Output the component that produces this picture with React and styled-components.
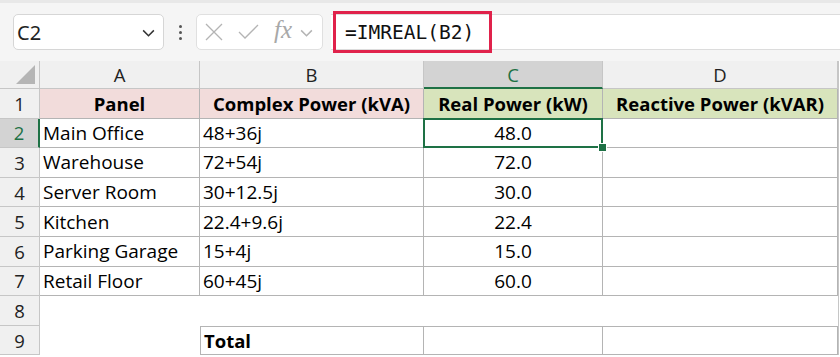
import React from 'react'
import styled, { createGlobalStyle } from 'styled-components'

const GlobalStyle = createGlobalStyle`
  body {
    margin: 0;
    background: #ffffff;
    font-family: "Open Sans", "Noto Sans", sans-serif;
  }
`

const GREEN = '#1e7145'
const GRID = '#c6c6c6'
const LINE = '#b4b4b4'

const Page = styled.div`
  width: 840px;
  height: 357px;
  overflow: hidden;
  background: #ffffff;
`

const Toolbar = styled.div`
  height: 61px;
  box-sizing: border-box;
  display: flex;
  align-items: center;
  padding: 0 0 0 13px;
  background: #f5f5f5;
  border-top: 3px solid #e8e8e8;
`

const NameBox = styled.div`
  width: 151px;
  height: 36px;
  box-sizing: border-box;
  display: flex;
  align-items: center;
  justify-content: space-between;
  padding: 0 7px 0 3px;
  background: #fff;
  border: 1px solid #d6d6d6;
  border-radius: 5px;
  font-family: "Noto Sans", sans-serif;
  font-size: 20px;
  color: #222;
`

const Dots = styled.div`
  width: 32px;
  display: flex;
  flex-direction: column;
  align-items: center;
  gap: 3px;
  span {
    width: 3px;
    height: 3px;
    border-radius: 50%;
    background: #555;
  }
`

const FuncBox = styled.div`
  width: 127px;
  height: 36px;
  box-sizing: border-box;
  display: flex;
  align-items: center;
  gap: 15px;
  padding: 0 4px 0 8px;
  background: #fff;
  border: 1px solid #e0e0e0;
  border-radius: 5px;
  color: #b4b4b4;
`

const Fx = styled.span`
  font-family: "Liberation Serif", serif;
  font-style: italic;
  font-size: 25px;
  color: #a8a8a8;
  margin: -4px -8px 0 0;
`

const FormulaBar = styled.div`
  flex: 1;
  height: 36px;
  margin-left: 8px;
  box-sizing: border-box;
  display: flex;
  align-items: center;
  background: #fff;
  border-top: 1px solid #dcdcdc;
  border-bottom: 1px solid #dcdcdc;
`

const Highlight = styled.div`
  height: 42px;
  width: 159px;
  box-sizing: border-box;
  margin-left: 2px;
  display: flex;
  align-items: center;
  padding-left: 9px;
  border: 3px solid #e0224b;
  font-family: "DejaVu Sans Mono", "Liberation Mono", monospace;
  font-size: 19.5px;
  color: #111;
`

const Sheet = styled.div`
  display: grid;
  grid-template-columns: 40px 160px 224px 179px 235px 2px;
  grid-template-rows: 28px repeat(9, 29.6px);
  font-family: "Open Sans", "Noto Sans", sans-serif;
`

const Corner = styled.div`
  position: relative;
  background: #f0f0f0;
  border-right: 1px solid ${GRID};
  border-bottom: 1px solid ${GRID};
  &::after {
    content: '';
    position: absolute;
    right: 4px;
    bottom: 4px;
    width: 0;
    height: 0;
    border-left: 19px solid transparent;
    border-bottom: 19px solid #b5b5b5;
  }
`

const ColHead = styled.div`
  box-sizing: border-box;
  display: flex;
  align-items: center;
  justify-content: center;
  background: ${p => (p.$active ? '#d3d3d3' : '#f0f0f0')};
  color: ${p => (p.$active ? GREEN : '#222')};
  border-right: 1px solid ${GRID};
  border-bottom: ${p => (p.$active ? `2px solid ${GREEN}` : `1px solid ${GRID}`)};
  font-size: 18.5px;
`

const RowHead = styled.div`
  box-sizing: border-box;
  display: flex;
  align-items: center;
  justify-content: center;
  background: ${p => (p.$active ? '#d3d3d3' : '#f0f0f0')};
  color: ${p => (p.$active ? GREEN : '#222')};
  border-right: ${p => (p.$active ? `2px solid ${GREEN}` : `1px solid ${GRID}`)};
  border-bottom: 1px solid ${GRID};
  font-size: 18.5px;
`

const Cell = styled.div`
  position: relative;
  z-index: ${p => (p.$selected ? 2 : 'auto')};
  box-sizing: border-box;
  display: flex;
  align-items: center;
  justify-content: ${p => (p.$align === 'center' ? 'center' : 'flex-start')};
  padding: 0 3px;
  white-space: nowrap;
  font-size: ${p => (p.$bold ? '18.5px' : '19px')};
  font-weight: ${p => (p.$bold ? 700 : 400)};
  color: #000;
  background: ${p => p.$fill || '#fff'};
  border-right: ${p => (p.$plain ? 'none' : `1px solid ${LINE}`)};
  border-bottom: ${p => (p.$plain ? 'none' : `1px solid ${LINE}`)};
  border-top: ${p => (p.$boxed ? `1px solid ${LINE}` : 'none')};
  border-left: ${p => (p.$boxedLeft ? `1px solid ${LINE}` : 'none')};
`

const Selection = styled.div`
  position: absolute;
  inset: -1px -1px -1px -1px;
  border: 2px solid ${GREEN};
  pointer-events: none;
`

const FillHandle = styled.div`
  position: absolute;
  right: -5px;
  bottom: -5px;
  width: 7px;
  height: 7px;
  background: ${GREEN};
  border: 1px solid #fff;
`

const Edge = styled.div`
  background: #fff;
  border-left: 1px solid ${GRID};
`

const Chevron = ({ color = '#333' }) => (
  <svg width="15" height="15" viewBox="0 0 14 14" fill="none" stroke={color} strokeWidth="1.4">
    <path d="M2 5l5 5 5-5" />
  </svg>
)

const PINK = '#f2dcdb'
const LIME = '#d8e4bc'

const rows = [
  ['Main Office', '48+36j', '48.0'],
  ['Warehouse', '72+54j', '72.0'],
  ['Server Room', '30+12.5j', '30.0'],
  ['Kitchen', '22.4+9.6j', '22.4'],
  ['Parking Garage', '15+4j', '15.0'],
  ['Retail Floor', '60+45j', '60.0'],
]

export default function App() {
  return (
    <Page>
      <GlobalStyle />
      <Toolbar>
        <NameBox>
          <span>C2</span>
          <Chevron />
        </NameBox>
        <Dots>
          <span />
          <span />
          <span />
        </Dots>
        <FuncBox>
          <svg width="18" height="18" viewBox="0 0 18 18" stroke="#b4b4b4" strokeWidth="1.3">
            <path d="M1 1l16 16M17 1L1 17" />
          </svg>
          <svg width="21" height="16" viewBox="0 0 21 16" fill="none" stroke="#b4b4b4" strokeWidth="1.3">
            <path d="M1 8l6 6L20 1" />
          </svg>
          <Fx>fx</Fx>
          <Chevron color="#b4b4b4" />
        </FuncBox>
        <FormulaBar>
          <Highlight>=IMREAL(B2)</Highlight>
        </FormulaBar>
      </Toolbar>
      <Sheet>
        <Corner />
        <ColHead>A</ColHead>
        <ColHead>B</ColHead>
        <ColHead $active>C</ColHead>
        <ColHead>D</ColHead>
        <Edge />

        <RowHead>1</RowHead>
        <Cell $fill={PINK} $align="center" $bold>Panel</Cell>
        <Cell $fill={PINK} $align="center" $bold>Complex Power (kVA)</Cell>
        <Cell $fill={LIME} $align="center" $bold>Real Power (kW)</Cell>
        <Cell $fill={LIME} $align="center" $bold>Reactive Power (kVAR)</Cell>
        <Edge />

        {rows.map((r, i) => (
          <React.Fragment key={r[0]}>
            <RowHead $active={i === 0}>{i + 2}</RowHead>
            <Cell>{r[0]}</Cell>
            <Cell>{r[1]}</Cell>
            <Cell $align="center" $selected={i === 0}>
              {r[2]}
              {i === 0 && <Selection />}
              {i === 0 && <FillHandle />}
            </Cell>
            <Cell />
            <Edge />
          </React.Fragment>
        ))}

        <RowHead>8</RowHead>
        <Cell $plain />
        <Cell $plain />
        <Cell $plain />
        <Cell $plain />
        <Edge />

        <RowHead>9</RowHead>
        <Cell $plain />
        <Cell $bold $boxed $boxedLeft>Total</Cell>
        <Cell $boxed />
        <Cell $boxed />
        <Edge />
      </Sheet>
    </Page>
  )
}
